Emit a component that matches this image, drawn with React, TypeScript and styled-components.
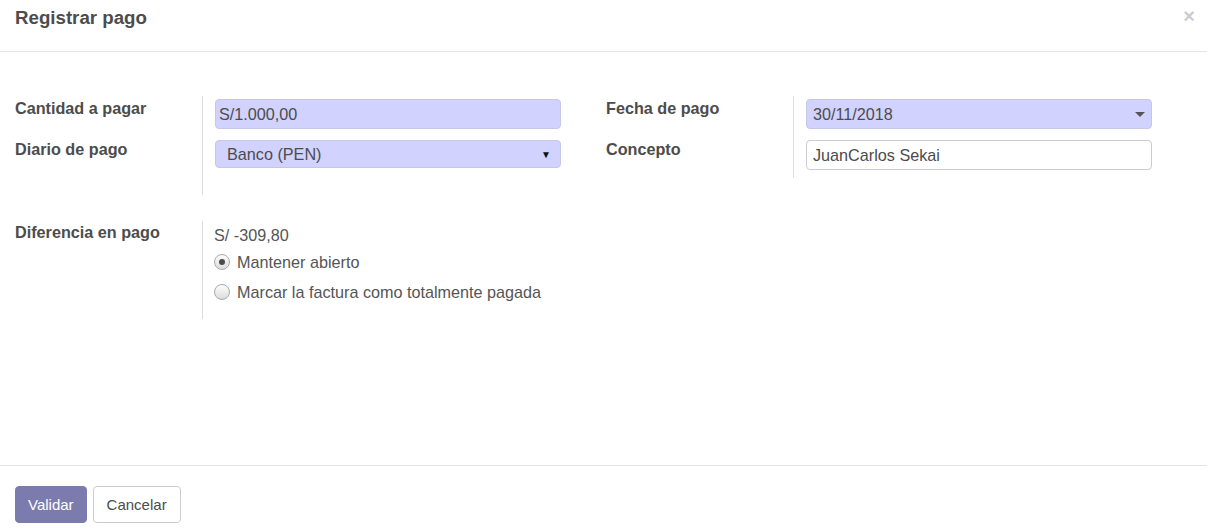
import styled, { createGlobalStyle } from 'styled-components'

const GlobalStyle = createGlobalStyle`
  html, body, #root {
    margin: 0;
    height: 100%;
  }
  body {
    font-family: "Liberation Sans", Arial, sans-serif;
    color: #4c4c4c;
    background: #fff;
  }
`

export default function App() {
  return (
    <>
      <GlobalStyle />
      <Modal>
        <Header>
          <Title>Registrar pago</Title>
          <CloseButton>×</CloseButton>
        </Header>
        <Body>
          <Section>
            <Group>
              <Label>Cantidad a pagar</Label>
              <Value>
                <Input $required>S/1.000,00</Input>
              </Value>
              <Label>Diario de pago</Label>
              <Value>
                <Select>
                  Banco (PEN)
                  <SmallArrow>▼</SmallArrow>
                </Select>
              </Value>
              <Label />
              <Value $spacer />
            </Group>
            <Group>
              <Label>Fecha de pago</Label>
              <Value>
                <DateInput>
                  30/11/2018
                  <Caret />
                </DateInput>
              </Value>
              <Label>Concepto</Label>
              <Value>
                <Input>JuanCarlos Sekai</Input>
              </Value>
            </Group>
          </Section>
          <Section>
            <Group>
              <Label $offset={1}>Diferencia en pago</Label>
              <Value $tall>
                <Amount>S/ -309,80</Amount>
                <RadioRow>
                  <Radio $checked />
                  Mantener abierto
                </RadioRow>
                <RadioRow>
                  <Radio />
                  Marcar la factura como totalmente pagada
                </RadioRow>
              </Value>
            </Group>
          </Section>
        </Body>
        <Footer>
          <Button $primary>Validar</Button>
          <Button>Cancelar</Button>
        </Footer>
      </Modal>
    </>
  )
}

const Modal = styled.div`
  display: flex;
  flex-direction: column;
  height: 100%;
  overflow: hidden;
`

const Header = styled.header`
  height: 52px;
  box-sizing: border-box;
  border-bottom: 1px solid #e5e5e5;
  padding: 8px 12px 0 15px;
  display: flex;
  justify-content: space-between;
  align-items: flex-start;
  flex-shrink: 0;
`

const Title = styled.h4`
  margin: 0;
  font-size: 18.7px;
  line-height: 20px;
  font-weight: bold;
  color: #4c4c4c;
`

const CloseButton = styled.span`
  font-size: 20px;
  line-height: 16px;
  font-weight: bold;
  color: #000;
  opacity: 0.2;
`

const Body = styled.main`
  flex: 1;
  padding: 44px 55px 0 15px;
  display: flex;
  flex-direction: column;
  gap: 26px;
`

const Section = styled.div`
  display: grid;
  grid-template-columns: 1fr 1fr;
  column-gap: 45px;
  align-items: start;
`

const Group = styled.div`
  display: grid;
  grid-template-columns: 187px 1fr;
`

const Label = styled.div<{ $offset?: number }>`
  font-size: 16.2px;
  line-height: 20px;
  font-weight: bold;
  color: #4c4c4c;
  padding-top: ${({ $offset }) => ($offset ?? 2)}px;
`

const Value = styled.div<{ $spacer?: boolean; $tall?: boolean }>`
  border-left: 1px solid #dedede;
  padding: ${({ $tall, $spacer }) =>
    $spacer ? '0' : $tall ? '4px 0 12px 11px' : '3px 0 8px 12px'};
  height: ${({ $spacer }) => ($spacer ? '19px' : 'auto')};
`

const Field = styled.div`
  position: relative;
  box-sizing: border-box;
  display: flex;
  align-items: center;
  font-size: 16.2px;
  color: #4c4c4c;
  border-radius: 4px;
`

const Input = styled(Field)<{ $required?: boolean }>`
  height: 30px;
  padding: 0 0 0 ${({ $required }) => ($required ? '3px' : '6px')};
  background: ${({ $required }) => ($required ? '#d2d2ff' : '#fff')};
  border: 1px solid ${({ $required }) => ($required ? '#c6c6e6' : '#cccccc')};
`

const Select = styled(Field)`
  height: 28px;
  padding: 0 9px 0 11px;
  background: #d2d2ff;
  border: 1px solid #c6c6e6;
  justify-content: space-between;
`

const SmallArrow = styled.span`
  font-size: 10px;
  color: #111;
`

const DateInput = styled(Field)`
  height: 30px;
  padding: 0 6px;
  background: #d2d2ff;
  border: 1px solid #c6c6e6;
  justify-content: space-between;
`

const Caret = styled.span`
  width: 0;
  height: 0;
  border-left: 5px solid transparent;
  border-right: 5px solid transparent;
  border-top: 5px solid #555;
`

const Amount = styled.div`
  font-size: 16.2px;
  line-height: 20px;
  color: #555;
`

const RadioRow = styled.label`
  display: flex;
  align-items: center;
  gap: 7px;
  height: 30px;
  font-size: 16.2px;
  color: #555;
  &:first-of-type {
    margin-top: 2px;
  }
`

const Radio = styled.span<{ $checked?: boolean }>`
  width: 14px;
  height: 14px;
  border-radius: 50%;
  border: 1px solid #a9a9a9;
  background: linear-gradient(#fdfdfd, #dcdcdc);
  display: flex;
  align-items: center;
  justify-content: center;
  flex-shrink: 0;
  &::after {
    content: '';
    width: 6px;
    height: 6px;
    border-radius: 50%;
    background: #4a4a4a;
    display: ${({ $checked }) => ($checked ? 'block' : 'none')};
  }
`

const Footer = styled.footer`
  flex-shrink: 0;
  height: 63px;
  box-sizing: border-box;
  border-top: 1px solid #e5e5e5;
  padding: 20px 15px 0;
  display: flex;
  gap: 6px;
  align-items: flex-start;
`

const Button = styled.button<{ $primary?: boolean }>`
  height: 37px;
  padding: 0 ${({ $primary }) => ($primary ? '12px' : '13px')};
  border-radius: 4px;
  font-family: "Liberation Sans", Arial, sans-serif;
  font-size: 15px;
  cursor: pointer;
  background: ${({ $primary }) => ($primary ? '#7c7bad' : '#fff')};
  color: ${({ $primary }) => ($primary ? '#fff' : '#4c4c4c')};
  border: 1px solid ${({ $primary }) => ($primary ? '#7c7bad' : '#cccccc')};
`
